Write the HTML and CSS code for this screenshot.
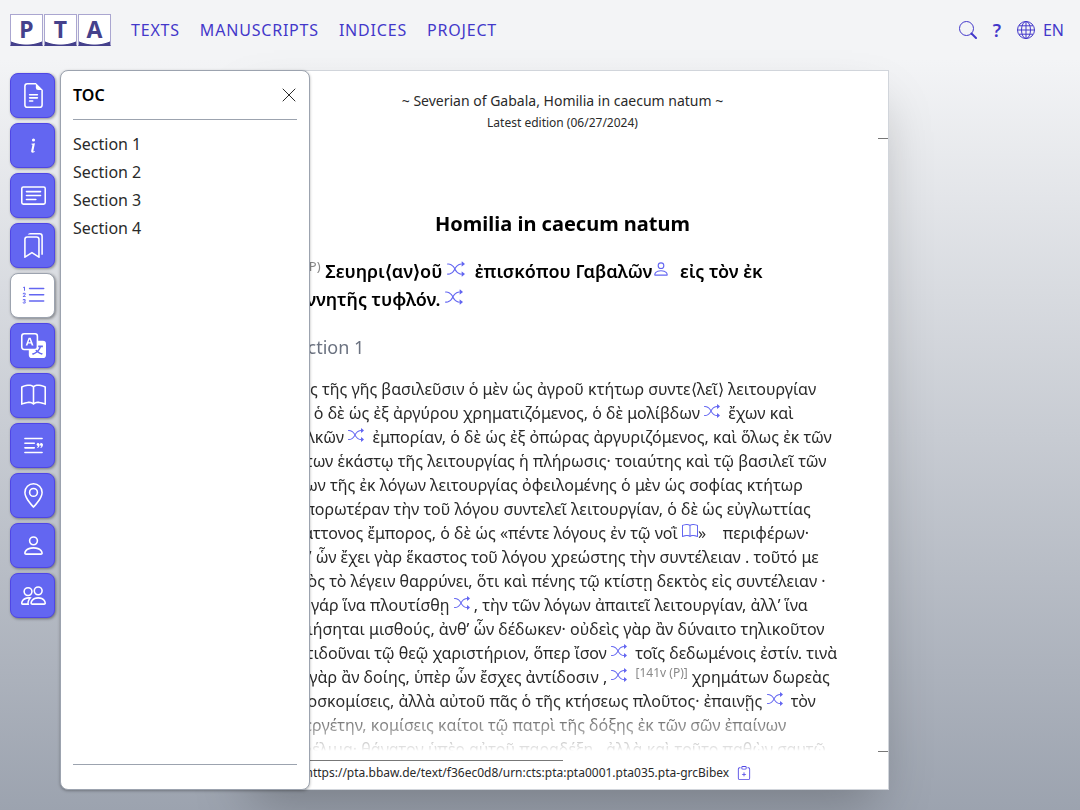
FILE: index.html
```html
<!DOCTYPE html>
<html lang="en">
<head>
<meta charset="utf-8">
<meta name="viewport" content="width=device-width, initial-scale=1">
<title>Homilia in caecum natum – PTA</title>
<link rel="stylesheet" href="styles.css">
</head>
<body>
<svg class="sprite" aria-hidden="true">
  <symbol id="file" viewBox="0 0 16 16"><path d="M5.5 7a.5.5 0 0 0 0 1h5a.5.5 0 0 0 0-1zM5 9.500a.5.5 0 0 1 .5-.5h5a.5.5 0 0 1 0 1h-5a.5.5 0 0 1-.5-.5m0 2a.5.5 0 0 1 .5-.5h2a.5.5 0 0 1 0 1h-2a.5.5 0 0 1-.5-.5"/><path d="M9.500 0H4a2 2 0 0 0-2 2v12a2 2 0 0 0 2 2h8a2 2 0 0 0 2-2V4.500zm0 1v2A1.500 1.500 0 0 0 11 4.500h2V14a1 1 0 0 1-1 1H4a1 1 0 0 1-1-1V2a1 1 0 0 1 1-1z"/></symbol>
  <symbol id="info" viewBox="0 0 16 16"><path d="m8.930 6.588-2.290.287-.082.380.450.083c.294.070.352.176.288.469l-.738 3.468c-.194.897.105 1.319.808 1.319.545 0 1.178-.252 1.465-.598l.088-.416c-.200.176-.492.246-.686.246-.275 0-.375-.193-.304-.533zM9 4.500a1 1 0 1 1-2 0 1 1 0 0 1 2 0"/></symbol>
  <symbol id="card" viewBox="0 0 16 16"><path d="M14.500 3a.5.5 0 0 1 .5.5v9a.5.5 0 0 1-.5.5h-13a.5.5 0 0 1-.5-.5v-9a.5.5 0 0 1 .5-.5zm-13-1A1.500 1.500 0 0 0 0 3.500v9A1.500 1.500 0 0 0 1.500 14h13a1.500 1.500 0 0 0 1.500-1.500v-9A1.500 1.500 0 0 0 14.500 2z"/><path d="M3 5.500a.5.5 0 0 1 .5-.5h9a.5.5 0 0 1 0 1h-9a.5.5 0 0 1-.5-.5M3 8a.5.5 0 0 1 .5-.5h9a.5.5 0 0 1 0 1h-9A.5.5 0 0 1 3 8m0 2.500a.5.5 0 0 1 .5-.5h6a.5.5 0 0 1 0 1h-6a.5.5 0 0 1-.5-.5"/></symbol>
  <symbol id="bookmarks" viewBox="0 0 16 16"><path d="M2 4a2 2 0 0 1 2-2h6a2 2 0 0 1 2 2v11.500a.5.5 0 0 1-.777.416L7 13.101l-4.223 2.815A.5.5 0 0 1 2 15.500zm2-1a1 1 0 0 0-1 1v10.566l3.723-2.482a.5.5 0 0 1 .554 0L11 14.566V4a1 1 0 0 0-1-1z"/><path d="M4.268 1H12a1 1 0 0 1 1 1v11.768l.223.148A.5.5 0 0 0 14 13.500V2a2 2 0 0 0-2-2H6a2 2 0 0 0-1.732 1"/></symbol>
  <symbol id="list" viewBox="0 0 16 16"><path d="M5 11.500a.5.5 0 0 1 .5-.5h9a.5.5 0 0 1 0 1h-9a.5.5 0 0 1-.5-.5m0-4a.5.5 0 0 1 .5-.5h9a.5.5 0 0 1 0 1h-9a.5.5 0 0 1-.5-.5m0-4a.5.5 0 0 1 .5-.5h9a.5.5 0 0 1 0 1h-9a.5.5 0 0 1-.5-.5"/><path d="M1.713 11.865v-.474H2c.217 0 .363-.137.363-.317 0-.185-.158-.310-.361-.310-.223 0-.367.152-.373.310h-.590c.016-.467.373-.787.986-.787.588-.002.954.291.957.703a.595.595 0 0 1-.492.594v.033a.615.615 0 0 1 .569.631c.003.533-.502.800-1.051.800-.656 0-1-.370-1.008-.794h.582c.008.178.186.306.422.309.254 0 .424-.145.422-.350-.002-.195-.155-.348-.414-.348h-.300zm-.004-4.699h-.604v-.035c0-.408.295-.844.958-.844.583 0 .960.326.960.756 0 .389-.257.617-.476.848l-.537.572v.030h1.054V9H1.143v-.395l.957-.990c.138-.142.293-.304.293-.508 0-.180-.147-.320-.342-.320a.330.330 0 0 0-.342.338zM2.564 5h-.635V2.924h-.031l-.598.420v-.567l.629-.443h.635z"/></symbol>
  <symbol id="translate" viewBox="0 0 16 16"><path d="M4.545 6.714 4.110 8H3l1.862-5h1.284L8 8H6.833l-.435-1.286zm1.634-.736L5.500 3.956h-.049l-.679 2.022z"/><path d="M0 2a2 2 0 0 1 2-2h7a2 2 0 0 1 2 2v3h3a2 2 0 0 1 2 2v7a2 2 0 0 1-2 2H7a2 2 0 0 1-2-2v-3H2a2 2 0 0 1-2-2zm2-1a1 1 0 0 0-1 1v7a1 1 0 0 0 1 1h7a1 1 0 0 0 1-1V2a1 1 0 0 0-1-1zm7.138 9.995q.289.451.630.846c-.748.575-1.673 1.001-2.768 1.292.178.217.451.635.555.867 1.125-.359 2.080-.844 2.886-1.494.777.665 1.739 1.165 2.930 1.472.133-.254.414-.673.629-.890-1.125-.253-2.057-.694-2.820-1.284.681-.747 1.222-1.651 1.621-2.757H14V8h-3v1.047h.765c-.318.844-.740 1.546-1.272 2.130a6 6 0 0 1-.415-.492 2 2 0 0 1-.940.310"/></symbol>
  <symbol id="book" viewBox="0 0 16 16"><path d="M1 2.828c.885-.370 2.154-.769 3.388-.893 1.330-.134 2.458.063 3.112.752v9.746c-.935-.530-2.120-.603-3.213-.493-1.180.120-2.370.461-3.287.811zm7.500-.141c.654-.689 1.782-.886 3.112-.752 1.234.124 2.503.523 3.388.893v9.923c-.918-.350-2.107-.692-3.287-.810-1.094-.111-2.278-.039-3.213.492zM8 1.783C7.015.936 5.587.810 4.287.940c-1.514.153-3.042.672-3.994 1.105A.5.5 0 0 0 0 2.500v11a.5.5 0 0 0 .707.455c.882-.400 2.303-.881 3.680-1.020 1.409-.142 2.590.087 3.223.877a.5.5 0 0 0 .780 0c.633-.790 1.814-1.019 3.222-.877 1.378.139 2.800.620 3.681 1.020A.5.5 0 0 0 16 13.500v-11a.5.5 0 0 0-.293-.455c-.952-.433-2.480-.952-3.994-1.105C10.413.809 8.985.936 8 1.783"/></symbol>
  <symbol id="quote" viewBox="0 0 16 16"><path d="M2.500 3a.5.5 0 0 0 0 1h11a.5.5 0 0 0 0-1zm0 3a.5.5 0 0 0 0 1h6a.5.5 0 0 0 0-1zm0 3a.5.5 0 0 0 0 1h6a.5.5 0 0 0 0-1zm0 3a.5.5 0 0 0 0 1h11a.5.5 0 0 0 0-1z"/><circle cx="10.900" cy="7.400" r=".9"/><circle cx="13" cy="7.400" r=".9"/><path d="M10.300 6.200c1.300.2 1.800 1.100 1.500 2.100-.2.600-.6 1-1.200 1.300l-.3-.5c.5-.3.800-.7.700-1.200zM12.400 6.200c1.300.2 1.800 1.100 1.500 2.100-.2.600-.6 1-1.200 1.300l-.3-.5c.5-.3.800-.7.700-1.200z"/></symbol>
  <symbol id="pin" viewBox="0 0 16 16"><path d="M12.166 8.940c-.524 1.062-1.234 2.120-1.960 3.070A32 32 0 0 1 8 14.580a32 32 0 0 1-2.206-2.570c-.726-.950-1.436-2.008-1.960-3.070C3.304 7.867 3 6.862 3 6a5 5 0 0 1 10 0c0 .862-.305 1.867-.834 2.940M8 16s6-5.686 6-10A6 6 0 0 0 2 6c0 4.314 6 10 6 10"/><path d="M8 8a2 2 0 1 1 0-4 2 2 0 0 1 0 4m0 1a3 3 0 1 0 0-6 3 3 0 0 0 0 6"/></symbol>
  <symbol id="person" viewBox="0 0 16 16"><path d="M8 8a3 3 0 1 0 0-6 3 3 0 0 0 0 6m2-3a2 2 0 1 1-4 0 2 2 0 0 1 4 0m4 8c0 1-1 1-1 1H3s-1 0-1-1 1-4 6-4 6 3 6 4m-1-.004c-.001-.246-.154-.986-.832-1.664C11.516 10.680 10.289 10 8 10s-3.516.680-4.168 1.332c-.678.678-.830 1.418-.832 1.664z"/></symbol>
  <symbol id="people" viewBox="0 0 16 16"><path d="M15 14s1 0 1-1-1-4-5-4-5 3-5 4 1 1 1 1zm-7.978-1A.261.261 0 0 1 7 12.996c.001-.264.167-1.030.760-1.720C8.312 10.629 9.282 10 11 10c1.717 0 2.687.630 3.240 1.276.593.690.758 1.457.760 1.720l-.008.002a.274.274 0 0 1-.014.002H7.022zM11 7a2 2 0 1 0 0-4 2 2 0 0 0 0 4zm3-2a3 3 0 1 1-6 0 3 3 0 0 1 6 0zM6.936 9.280a5.880 5.880 0 0 0-1.230-.247A7.350 7.350 0 0 0 5 9c-4 0-5 3-5 4 0 .667.333 1 1 1h4.216A2.238 2.238 0 0 1 5 13c0-1.010.377-2.042 1.090-2.904.243-.294.526-.569.846-.816zM4.920 10A5.493 5.493 0 0 0 4 13H1c0-.260.164-1.030.760-1.724.545-.636 1.492-1.256 3.160-1.275zM1.500 5.500a3 3 0 1 1 6 0 3 3 0 0 1-6 0zm3-2a2 2 0 1 0 0 4 2 2 0 0 0 0-4z"/></symbol>
  <symbol id="shuffle" viewBox="0 0 16 16"><path d="M0 3.500A.5.5 0 0 1 .5 3H1c2.202 0 3.827 1.240 4.874 2.418.490.552.865 1.102 1.126 1.532.260-.430.636-.980 1.126-1.532C9.173 4.240 10.798 3 13 3v1c-1.798 0-3.173 1.010-4.126 2.082A9.600 9.600 0 0 0 7.556 8a9.600 9.600 0 0 0 1.317 1.918C9.828 10.990 11.204 12 13 12v1c-2.202 0-3.827-1.240-4.874-2.418A10.600 10.600 0 0 1 7 9.050c-.260.430-.636.980-1.126 1.532C4.827 11.760 3.202 13 1 13H.5a.5.5 0 0 1 0-1H1c1.798 0 3.173-1.010 4.126-2.082A9.600 9.600 0 0 0 6.444 8a9.600 9.600 0 0 0-1.317-1.918C4.172 5.010 2.796 4 1 4H.5a.5.5 0 0 1-.5-.5"/><path d="M13 5.466V1.534a.25.25 0 0 1 .410-.192l2.360 1.966c.120.100.120.284 0 .384l-2.360 1.966a.25.25 0 0 1-.410-.192m0 9v-3.932a.25.25 0 0 1 .410-.192l2.360 1.966c.120.100.120.284 0 .384l-2.360 1.966a.25.25 0 0 1-.410-.192"/></symbol>
  <symbol id="clip" viewBox="0 0 16 16"><path d="M8 7a.5.5 0 0 1 .5.5V9H10a.5.5 0 0 1 0 1H8.500v1.500a.5.5 0 0 1-1 0V10H6a.5.5 0 0 1 0-1h1.500V7.500A.5.5 0 0 1 8 7"/><path d="M4 1.500H3a2 2 0 0 0-2 2V14a2 2 0 0 0 2 2h10a2 2 0 0 0 2-2V3.500a2 2 0 0 0-2-2h-1v1h1a1 1 0 0 1 1 1V14a1 1 0 0 1-1 1H3a1 1 0 0 1-1-1V3.500a1 1 0 0 1 1-1h1z"/><path d="M9.500 1a.5.5 0 0 1 .5.5v1a.5.5 0 0 1-.5.5h-3a.5.5 0 0 1-.5-.5v-1a.5.5 0 0 1 .5-.5zm-3-1A1.500 1.500 0 0 0 5 1.500v1A1.500 1.500 0 0 0 6.500 4h3A1.500 1.500 0 0 0 11 2.500v-1A1.500 1.500 0 0 0 9.500 0z"/></symbol>
</svg>

<header class="topbar">
  <a class="logo" href="#" aria-label="PTA home"><span class="tile">P</span><span class="tile">T</span><span class="tile">A</span></a>
  <nav class="menu">
    <a href="#">TEXTS</a><a href="#">MANUSCRIPTS</a><a href="#">INDICES</a><a href="#">PROJECT</a>
  </nav>
  <div class="tools">
    <button class="tool" aria-label="Search"><svg class="ic18" viewBox="0 0 18 18" fill="none" stroke="currentColor"><circle cx="7.500" cy="7.500" r="7"/><path d="m12.500 12.500 4.500 4.500" stroke-width="2" stroke-linecap="round"/></svg></button>
    <button class="tool help" aria-label="Help">?</button>
    <button class="tool lang"><svg class="ic18" viewBox="0 0 18 18" fill="none" stroke="currentColor" aria-hidden="true"><circle cx="9" cy="9" r="8.500"/><ellipse cx="9" cy="9" rx="4.500" ry="8.500"/><path d="M9 .5v17M.5 9h17M2 4.800h14M2 13.200h14"/></svg>EN</button>
  </div>
</header>

<main class="workspace">
  <div class="rail">
    <button class="rail-btn" aria-label="Text"><svg><use href="#file"/></svg></button>
    <button class="rail-btn" aria-label="Information"><svg><use href="#info"/></svg></button>
    <button class="rail-btn" aria-label="Description"><svg><use href="#card"/></svg></button>
    <button class="rail-btn" aria-label="Bookmarks"><svg><use href="#bookmarks"/></svg></button>
    <button class="rail-btn active" aria-label="Table of contents" aria-pressed="true"><svg><use href="#list"/></svg></button>
    <button class="rail-btn" aria-label="Translation"><svg><use href="#translate"/></svg></button>
    <button class="rail-btn" aria-label="Biblical references"><svg><use href="#book"/></svg></button>
    <button class="rail-btn" aria-label="Quotations"><svg><use href="#quote"/></svg></button>
    <button class="rail-btn" aria-label="Places"><svg><use href="#pin"/></svg></button>
    <button class="rail-btn" aria-label="Persons"><svg><use href="#person"/></svg></button>
    <button class="rail-btn" aria-label="Groups"><svg><use href="#people"/></svg></button>
  </div>

  <aside class="panel">
    <div class="panel-head">
      <h2>TOC</h2>
      <button class="close" aria-label="Close"><svg viewBox="0 0 14 14" stroke="currentColor" stroke-linecap="round"><path d="m1 1 12 12M13 1 1 13"/></svg></button>
    </div>
    <nav class="toc"><a href="#s1">Section 1</a><a href="#s2">Section 2</a><a href="#s3">Section 3</a><a href="#s4">Section 4</a></nav>
    <div class="panel-foot"></div>
  </aside>

  <article class="sheet">
    <header class="sheet-head">
      <p class="work">~ Severian of Gabala, Homilia in caecum natum ~</p>
      <p class="edition">Latest edition (06/27/2024)</p>
    </header>
    <div class="tick"></div>
    <div class="scroll">
      <h1>Homilia in caecum natum</h1>
      <div class="title" lang="grc">
        <div><sup>1v (P)</sup> Σευηρι⟨αν⟩οῦ <svg class="note"><use href="#shuffle"/></svg> ἐπισκόπου Γαβαλῶν<svg class="ref"><use href="#person"/></svg> εἰς τὸν ἐκ</div>
        <div>γεννητῆς τυφλόν. <svg class="note"><use href="#shuffle"/></svg></div>
      </div>
      <h2 class="section" id="s1">Section 1</h2>
      <div class="text" lang="grc">
        <div>Τοῖς τῆς γῆς βασιλεῦσιν ὁ μὲν ὡς ἀγροῦ κτήτωρ συντε⟨λεῖ⟩ λειτουργίαν</div>
        <div>γῆ &nbsp;ὁ δὲ ὡς ἐξ ἀργύρου χρηματιζόμενος, ὁ δὲ μολίβδων <svg class="note"><use href="#shuffle"/></svg> ἔχων καὶ</div>
        <div>χαλκῶν <svg class="note"><use href="#shuffle"/></svg> ἐμπορίαν, ὁ δὲ ὡς ἐξ ὀπώρας ἀργυριζόμενος, καὶ ὅλως ἐκ τῶν</div>
        <div>ὄντων ἑκάστῳ τῆς λειτουργίας ἡ πλήρωσις· τοιαύτης καὶ τῷ βασιλεῖ τῶν</div>
        <div>ὅλων τῆς ἐκ λόγων λειτουργίας ὀφειλομένης ὁ μὲν ὡς σοφίας κτήτωρ</div>
        <div>εὐπορωτέραν τὴν τοῦ λόγου συντελεῖ λειτουργίαν, ὁ δὲ ὡς εὐγλωττίας</div>
        <div>ἐλάττονος ἔμπορος, ὁ δὲ ὡς «πέντε λόγους ἐν τῷ νοῒ <svg class="ref"><use href="#book"/></svg>» &nbsp;&nbsp; περιφέρων·</div>
        <div>ἀφ’ ὧν ἔχει γὰρ ἕκαστος τοῦ λόγου χρεώστης τὴν συντέλειαν . τοῦτό με</div>
        <div>πρὸς τὸ λέγειν θαρρύνει, ὅτι καὶ πένης τῷ κτίστῃ δεκτὸς εἰς συντέλειαν ·</div>
        <div>οὐ γάρ ἵνα πλουτίσθῃ <svg class="note"><use href="#shuffle"/></svg>, τὴν τῶν λόγων ἀπαιτεῖ λειτουργίαν, ἀλλ’ ἵνα</div>
        <div>ποιήσηται μισθούς, ἀνθ’ ὧν δέδωκεν· οὐδεὶς γὰρ ἂν δύναιτο τηλικοῦτον</div>
        <div>ἀντιδοῦναι τῷ θεῷ χαριστήριον, ὅπερ ἴσον <svg class="note"><use href="#shuffle"/></svg> τοῖς δεδωμένοις ἐστίν. τινὰ</div>
        <div>ἃς γὰρ ἂν δοίης, ὑπὲρ ὧν ἔσχες ἀντίδοσιν , <svg class="note"><use href="#shuffle"/></svg> <sup>[141v (P)]</sup> χρημάτων δωρεὰς</div>
        <div>προσκομίσεις, ἀλλὰ αὐτοῦ πᾶς ὁ τῆς κτήσεως πλοῦτος· ἐπαινῇς <svg class="note"><use href="#shuffle"/></svg> τὸν</div>
        <div>εὐεργέτην, κομίσεις καίτοι τῷ πατρὶ τῆς δόξης ἐκ τῶν σῶν ἐπαίνων</div>
        <div>ὠφέλιμα· θάνατον ὑπὲρ αὐτοῦ παραδέξῃ , ἀλλὰ καὶ τοῦτο παθὼν σαυτῷ</div>
      </div>
    </div>
    <div class="tick"></div>
    <footer class="sheet-foot">
      <div class="rule"></div>
      <p class="cite"><span>https://pta.bbaw.de/text/f36ec0d8/urn:cts:pta:pta0001.pta035.pta-grcBibex</span><button aria-label="Copy link"><svg><use href="#clip"/></svg></button></p>
    </footer>
  </article>
</main>
</body>
</html>
```
FILE: styles.css
```css
* { box-sizing: border-box; }
body {
  margin: 0;
  height: 100vh;
  display: flex;
  flex-direction: column;
  overflow: hidden;
  font: 16px/24px "Noto Sans", sans-serif;
  color: #2a2a2a;
  background: #f3f4f6;
}
h1, h2, p { margin: 0; }
a { color: inherit; text-decoration: none; }
button { font: inherit; color: inherit; padding: 0; border: 0; background: none; cursor: pointer; }
svg { fill: currentColor; }
.sprite { display: none; }

.topbar {
  flex: none;
  height: 60px;
  padding: 0 16px 0 10px;
  display: flex;
  align-items: center;
  color: #4338ca;
}
.logo { display: flex; gap: 1px; margin-right: 20px; }
.tile {
  width: 33px;
  height: 32px;
  border: 1px solid #aaa6d0;
  border-bottom-color: #45418c;
  background: radial-gradient(ellipse 35px 30px at 50% 0, #fff 97%, #45418c 100%);
  color: #45418c;
  font: bold 23px/29px "Noto Sans", sans-serif;
  text-align: center;
}
.menu { display: flex; gap: 20px; letter-spacing: 0.05em; }
.tools { margin-left: auto; display: flex; align-items: center; gap: 16px; }
.tool { display: flex; align-items: center; gap: 8px; }
.help { font-size: 18px; font-weight: 600; }
.ic18 { width: 18px; height: 18px; fill: none; }

.workspace {
  flex: 1;
  min-height: 0;
  position: relative;
  display: grid;
  grid-template-columns: 45px minmax(0, 1fr);
  padding: 10px 10px 20px;
  background: linear-gradient(#f3f4f6, #9ca3af);
}
.rail { display: flex; flex-direction: column; gap: 5px; padding-top: 3px; }
.rail-btn {
  display: grid;
  place-items: center;
  flex: none;
  width: 45px;
  height: 45px;
  padding-left: 1px;
  border: 1px solid #4f46e5;
  border-radius: 8px;
  background: #6366f1;
  color: #fff;
  box-shadow: 1px 1px 3px rgba(0, 0, 0, 0.4);
}
.rail-btn svg { width: 25px; height: 25px; }
.rail-btn.active { background: #fff; color: #6366f1; border-color: #9ca3af; }

.panel {
  position: absolute;
  z-index: 1;
  top: 10px;
  bottom: 20px;
  left: 60px;
  width: 250px;
  padding: 0 12px;
  display: flex;
  flex-direction: column;
  border: 1px solid #9ca3af;
  border-radius: 8px;
  background: #fff;
  box-shadow: 0 1px 3px rgba(0, 0, 0, 0.3);
}
.panel-head {
  height: 49px;
  padding-right: 1px;
  display: flex;
  align-items: center;
  justify-content: space-between;
  border-bottom: 1px solid #9ca3af;
}
.panel-head h2 { font-size: 16px; font-weight: 600; color: #000; }
.close { display: flex; }
.close svg { width: 14px; height: 14px; }
.toc { flex: 1; display: flex; flex-direction: column; gap: 4px; padding-top: 12px; }
.panel-foot { height: 25px; border-top: 1px solid #9ca3af; }

.sheet {
  width: 100%;
  max-width: 652px;
  min-height: 0;
  margin: 0 auto;
  display: flex;
  flex-direction: column;
  border: 1px solid #d1d5db;
  background: #fff;
  box-shadow: 0 25px 50px -12px rgba(0, 0, 0, 0.25);
}
.sheet-head { height: 67px; padding-top: 20px; text-align: center; }
.work { font-size: 14px; line-height: 20px; }
.edition { font-size: 12px; line-height: 24px; }
.tick { flex: none; align-self: flex-end; width: 10px; height: 1px; background: #777; }
.scroll {
  flex: 1;
  min-height: 0;
  overflow: hidden;
  padding: 71px 50px 0;
  white-space: nowrap;
  -webkit-mask-image: linear-gradient(#000 calc(100% - 48px), rgba(0, 0, 0, 0.12) calc(100% - 3px), transparent);
  mask-image: linear-gradient(#000 calc(100% - 48px), rgba(0, 0, 0, 0.12) calc(100% - 3px), transparent);
}
h1 { font-size: 20px; line-height: 28px; font-weight: 700; text-align: center; color: #000; }
.title { margin-top: 19px; font-size: 18px; line-height: 28px; font-weight: 600; color: #000; }
.section { margin: 20px 0 16px; font-size: 18px; line-height: 28px; font-weight: 400; color: #6b7280; }
sup { font-size: 12px; line-height: 0; font-weight: 400; color: #888; }
.title sup { font-size: 13px; }
.note, .ref { width: 1em; height: 1em; vertical-align: baseline; color: #6366f1; }
.note { margin-right: 4px; }
.title .note, .title .ref { margin-right: 5px; }
.sheet-foot { height: 37px; padding: 8px 50px 0; }
.rule { width: 50%; height: 1px; background: #777; }
.cite { display: flex; align-items: center; gap: 8px; padding-left: 18px; font-size: 12px; line-height: 24px; }
.cite button { display: flex; color: #4f46e5; }
.cite svg { width: 14px; height: 14px; }
```
